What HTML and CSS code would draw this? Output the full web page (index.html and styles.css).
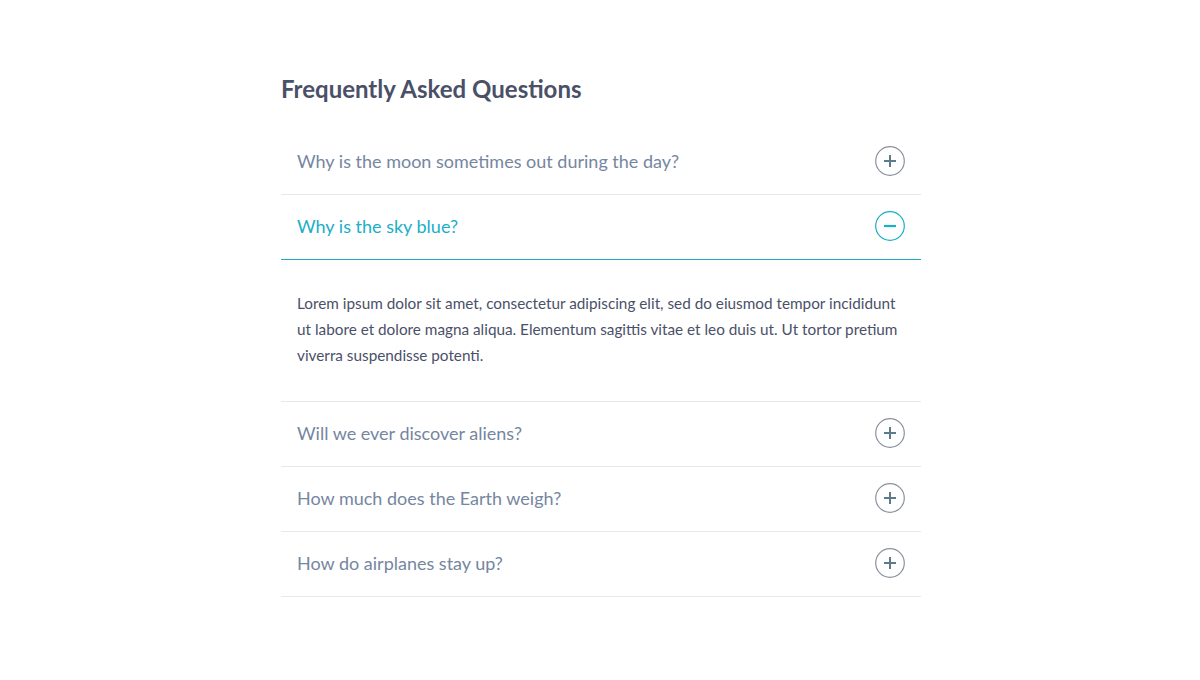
FILE: index.html
```html
<!DOCTYPE html>
<html lang="en">
<head>
<meta charset="utf-8">
<title>FAQ</title>
<link rel="stylesheet" href="styles.css">
</head>
<body>
<main class="faq">
  <h1 class="faq-title">Frequently Asked Questions</h1>
  <div class="faq-list">
    <div class="faq-item">
      <div class="faq-q">
        <span class="faq-q-text">Why is the moon sometimes out during the day?</span>
        <svg class="faq-icon" viewBox="0 0 30 30" width="30" height="30"><circle class="ring" cx="15" cy="15" r="14.3" fill="none" stroke-width="1.2"/><path class="sign" d="M9 15h12M15 9v12" stroke-width="2"/></svg>
      </div>
    </div>
    <div class="faq-item is-open">
      <div class="faq-q">
        <span class="faq-q-text">Why is the sky blue?</span>
        <svg class="faq-icon" viewBox="0 0 30 30" width="30" height="30"><circle class="ring" cx="15" cy="15" r="14.3" fill="none" stroke-width="1.2"/><path class="sign" d="M9 15h12" stroke-width="2.2"/></svg>
      </div>
      <div class="faq-a">
        <p>Lorem ipsum dolor sit amet, consectetur adipiscing elit, sed do eiusmod tempor incididunt ut labore et dolore magna aliqua. Elementum sagittis vitae et leo duis ut. Ut tortor pretium viverra suspendisse potenti.</p>
      </div>
    </div>
    <div class="faq-item">
      <div class="faq-q">
        <span class="faq-q-text">Will we ever discover aliens?</span>
        <svg class="faq-icon" viewBox="0 0 30 30" width="30" height="30"><circle class="ring" cx="15" cy="15" r="14.3" fill="none" stroke-width="1.2"/><path class="sign" d="M9 15h12M15 9v12" stroke-width="2"/></svg>
      </div>
    </div>
    <div class="faq-item">
      <div class="faq-q">
        <span class="faq-q-text">How much does the Earth weigh?</span>
        <svg class="faq-icon" viewBox="0 0 30 30" width="30" height="30"><circle class="ring" cx="15" cy="15" r="14.3" fill="none" stroke-width="1.2"/><path class="sign" d="M9 15h12M15 9v12" stroke-width="2"/></svg>
      </div>
    </div>
    <div class="faq-item">
      <div class="faq-q">
        <span class="faq-q-text">How do airplanes stay up?</span>
        <svg class="faq-icon" viewBox="0 0 30 30" width="30" height="30"><circle class="ring" cx="15" cy="15" r="14.3" fill="none" stroke-width="1.2"/><path class="sign" d="M9 15h12M15 9v12" stroke-width="2"/></svg>
      </div>
    </div>
  </div>
</main>
</body>
</html>
```
FILE: styles.css
```css
* { box-sizing: border-box; }
html, body { margin: 0; padding: 0; background: #fff; }
body { font-family: Lato, "Liberation Sans", sans-serif; padding-left: 2px; }

.faq {
  width: 640px;
  margin: 0 auto;
  padding-top: 74px;
}

.faq-title {
  margin: 0 0 26px;
  font-size: 24px;
  line-height: 30px;
  font-weight: 700;
  color: #4a5068;
}

.faq-item {
  border-bottom: 1px solid #e6e8ec;
}

.faq-q {
  display: flex;
  align-items: center;
  justify-content: space-between;
  height: 64px;
  padding: 0 16px 2px;
  color: #7686a0;
}

.faq-q-text {
  font-size: 18px;
}

.faq-icon {
  display: block;
  flex: none;
}
.faq-icon .ring { stroke: #8a929c; }
.faq-icon .sign { stroke: #5b7c89; }

.faq-item.is-open .faq-q {
  height: 65px;
  color: #1aaec7;
  border-bottom: 1px solid #1aaec7;
}
.faq-item.is-open .faq-icon .ring,
.faq-item.is-open .faq-icon .sign { stroke: #1aaec7; }

.faq-a {
  padding: 30px 16px 33px;
}

.faq-a p {
  margin: 0;
  font-size: 15.3px;
  line-height: 26px;
  color: #4a5068;
}
```
